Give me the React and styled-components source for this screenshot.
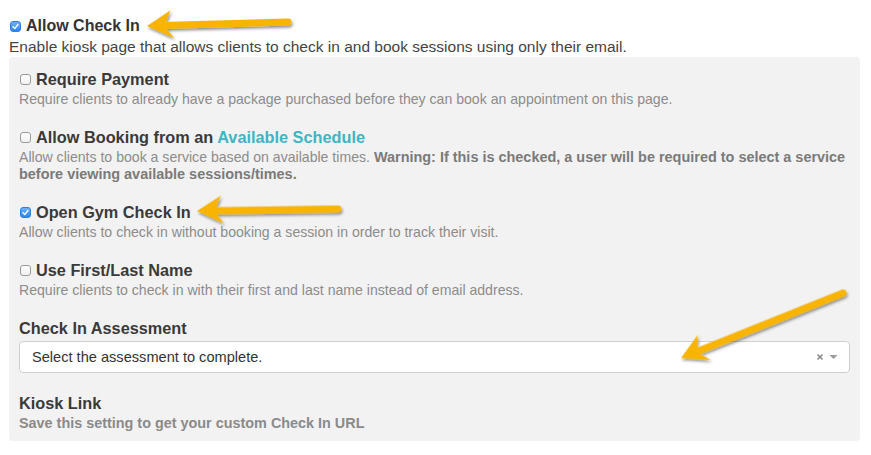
import React from "react";
import styled, { createGlobalStyle } from "styled-components";

const GlobalStyle = createGlobalStyle`
  html, body {
    margin: 0;
    padding: 0;
    background: #fff;
    font-family: "Liberation Sans", Helvetica, Arial, sans-serif;
  }
`;

const arrows = [
  { tip: [147, 26], tail: [288, 22] },
  { tip: [197, 211], tail: [338, 209] },
  { tip: [681, 358], tail: [843, 293] },
];

const CheckBox = ({ checked }) => (
  <Box $checked={checked}>
    {checked && (
      <svg width="9" height="9" viewBox="0 0 9 9">
        <path
          d="M2 4.8 L3.8 6.5 L7 2.5"
          fill="none"
          stroke="#fff"
          strokeWidth="1.4"
          strokeLinecap="round"
          strokeLinejoin="round"
        />
      </svg>
    )}
  </Box>
);

const Arrow = ({ tip, tail }) => {
  const dx = tail[0] - tip[0];
  const dy = tail[1] - tip[1];
  const len = Math.sqrt(dx * dx + dy * dy);
  const angle = (Math.atan2(dy, dx) * 180) / Math.PI;
  return (
    <g transform={`translate(${tip[0]} ${tip[1]}) rotate(${angle})`}>
      <line
        x1="16"
        y1="0"
        x2={len}
        y2="0"
        stroke="#f8b400"
        strokeWidth="7"
        strokeLinecap="round"
      />
      <path d="M0 0 L24 -15 L19 -3 L19 3 L27 13 Z" fill="#f8b400" />
    </g>
  );
};

const App = () => {
  const options = [
    {
      title: "Require Payment",
      checked: false,
      text: "Require clients to already have a package purchased before they can book an appointment on this page.",
    },
    {
      title: (
        <>
          Allow Booking from an <Link>Available Schedule</Link>
        </>
      ),
      checked: false,
      text: (
        <>
          Allow clients to book a service based on available times.{" "}
          <strong>
            Warning: If this is checked, a user will be required to select a
            service before viewing available sessions/times.
          </strong>
        </>
      ),
    },
    {
      title: "Open Gym Check In",
      checked: true,
      text: "Allow clients to check in without booking a session in order to track their visit.",
    },
    {
      title: "Use First/Last Name",
      checked: false,
      text: "Require clients to check in with their first and last name instead of email address.",
    },
  ];

  return (
    <Page>
      <GlobalStyle />
      <MainRow>
        <CheckBox checked />
        <MainTitle>Allow Check In</MainTitle>
      </MainRow>
      <MainText>
        Enable kiosk page that allows clients to check in and book sessions
        using only their email.
      </MainText>
      <Panel>
        {options.map((item, index) => (
          <Option key={`option${index}`}>
            <OptionRow>
              <CheckBox checked={item.checked} />
              <OptionTitle>{item.title}</OptionTitle>
            </OptionRow>
            <OptionText>{item.text}</OptionText>
          </Option>
        ))}
        <Option>
          <FieldLabel>Check In Assessment</FieldLabel>
          <Select>
            <span>Select the assessment to complete.</span>
            <SelectIcons>
              <svg width="8" height="8" viewBox="0 0 8 8">
                <path
                  d="M1.5 1.5 L6.5 6.5 M6.5 1.5 L1.5 6.5"
                  stroke="#8a8a8a"
                  strokeWidth="1.6"
                />
              </svg>
              <svg width="9" height="6" viewBox="0 0 9 6">
                <path d="M0.5 1 L8.5 1 L4.5 5 Z" fill="#9a9a9a" />
              </svg>
            </SelectIcons>
          </Select>
        </Option>
        <KioskBlock>
          <FieldLabel>Kiosk Link</FieldLabel>
          <KioskText>Save this setting to get your custom Check In URL</KioskText>
        </KioskBlock>
      </Panel>
      <Overlay width="871" height="455" viewBox="0 0 871 455">
        <defs>
          <filter id="shadow" x="-20%" y="-50%" width="140%" height="200%">
            <feDropShadow
              dx="1"
              dy="2"
              stdDeviation="1.5"
              floodColor="#000"
              floodOpacity="0.45"
            />
          </filter>
        </defs>
        <g filter="url(#shadow)">
          {arrows.map((a, index) => (
            <Arrow key={`arrow${index}`} tip={a.tip} tail={a.tail} />
          ))}
        </g>
      </Overlay>
    </Page>
  );
};

export default App;

const Page = styled.div`
  position: relative;
  width: 871px;
  height: 455px;
  padding: 15px 11px 0 9px;
  box-sizing: border-box;
`;

const MainRow = styled.div`
  display: flex;
  align-items: center;
  gap: 5px;
  padding-left: 1px;
  height: 22px;
`;

const MainTitle = styled.div`
  font-size: 16px;
  font-weight: bold;
  color: #333;
  line-height: 22px;
`;

const MainText = styled.div`
  font-size: 15.5px;
  color: #444;
  line-height: 20px;
  white-space: nowrap;
`;

const Panel = styled.div`
  background: #f2f2f2;
  border-radius: 4px;
  padding: 12px 10px 9px 10px;
  display: flex;
  flex-direction: column;
  gap: 19px;
`;

const Option = styled.div`
  display: flex;
  flex-direction: column;
`;

const OptionRow = styled.div`
  display: flex;
  align-items: center;
  gap: 5px;
  padding-left: 1px;
  height: 20px;
`;

const Box = styled.span`
  display: inline-flex;
  align-items: center;
  justify-content: center;
  width: 11px;
  height: 11px;
  box-sizing: border-box;
  border-radius: 3px;
  border: 1px solid ${(props) => (props.$checked ? "#2f7fe0" : "#9a9a9a")};
  background: ${(props) =>
    props.$checked
      ? "linear-gradient(#6cb0fa, #2d86ee)"
      : "linear-gradient(#ffffff, #f0f0f0)"};
  flex-shrink: 0;
`;

const OptionTitle = styled.div`
  font-size: 16.3px;
  font-weight: bold;
  color: #3a3a3a;
  line-height: 20px;
`;

const Link = styled.span`
  color: #3eb5c5;
`;

const OptionText = styled.div`
  margin-top: 2px;
  font-size: 14.1px;
  line-height: 17px;
  color: #8c8c8c;
  strong {
    font-size: 14.45px;
    color: #7a7a7a;
  }
`;

const FieldLabel = styled.div`
  font-size: 16.3px;
  font-weight: bold;
  color: #3a3a3a;
  line-height: 20px;
`;

const Select = styled.div`
  margin-top: 3px;
  height: 32px;
  box-sizing: border-box;
  background: #fff;
  border: 1px solid #cfcfcf;
  border-radius: 4px;
  display: flex;
  align-items: center;
  justify-content: space-between;
  padding: 0 11px 0 12px;
  font-size: 14.6px;
  color: #333;
`;

const SelectIcons = styled.div`
  display: flex;
  align-items: center;
  gap: 5px;
`;

const KioskBlock = styled.div`
  display: flex;
  flex-direction: column;
  margin-top: 1px;
`;

const KioskText = styled.div`
  margin-top: 2px;
  font-size: 14.4px;
  font-weight: bold;
  line-height: 17px;
  color: #8a8a8a;
`;

const Overlay = styled.svg`
  position: absolute;
  top: 0;
  left: 0;
  pointer-events: none;
`;
